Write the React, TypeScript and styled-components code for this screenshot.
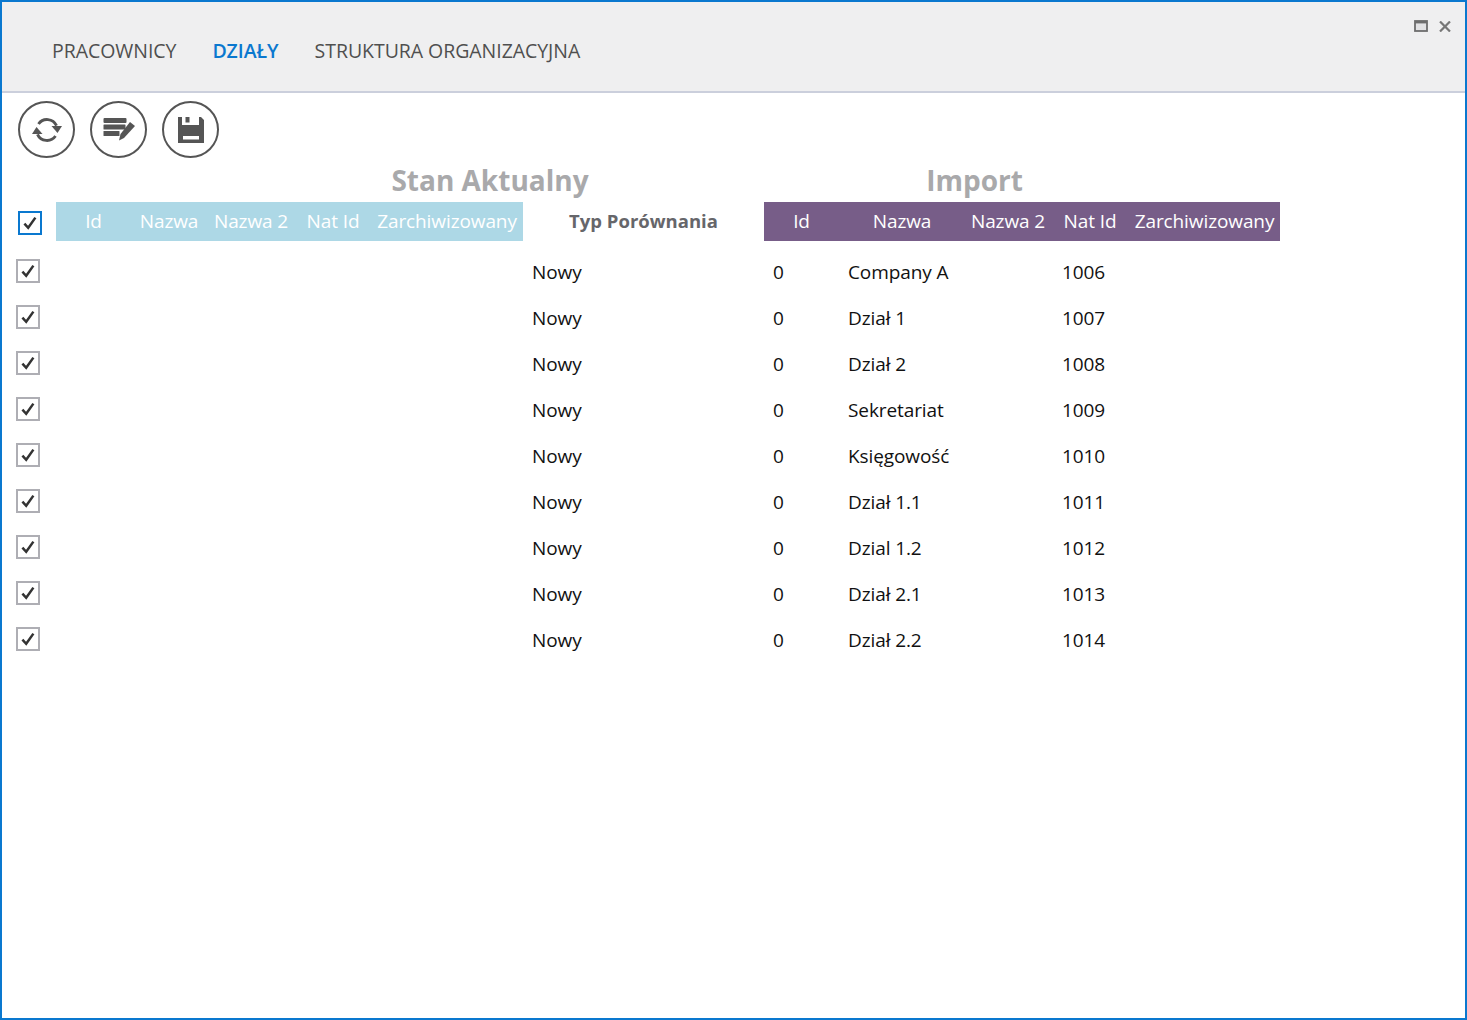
import React from "react";
import styled, { createGlobalStyle } from "styled-components";

const rows = [
  { name: "Company A", natId: "1006" },
  { name: "Dział 1", natId: "1007" },
  { name: "Dział 2", natId: "1008" },
  { name: "Sekretariat", natId: "1009" },
  { name: "Księgowość", natId: "1010" },
  { name: "Dział 1.1", natId: "1011" },
  { name: "Dzial 1.2", natId: "1012" },
  { name: "Dział 2.1", natId: "1013" },
  { name: "Dział 2.2", natId: "1014" },
];

const Global = createGlobalStyle`
  html, body {
    margin: 0;
    padding: 0;
    background: #fff;
    font-family: "Open Sans", "Noto Sans", "Liberation Sans", sans-serif;
  }
`;

const Window = styled.div`
  box-sizing: border-box;
  width: 1467px;
  height: 1020px;
  border: 2px solid #0a78cf;
  overflow: hidden;
`;

const Header = styled.div`
  position: relative;
  box-sizing: border-box;
  height: 91px;
  background: #efeff0;
  border-bottom: 2px solid #cbcfdc;
  display: flex;
  align-items: center;
  gap: 36px;
  padding: 8px 0 0 50px;
`;

const Tab = styled.div<{ $active?: boolean }>`
  font-size: 19.5px;
  letter-spacing: -0.05px;
  font-weight: ${(p) => (p.$active ? 600 : 400)};
  color: ${(p) => (p.$active ? "#0a78cf" : "#4f4f4f")};
`;

const WindowButtons = styled.div`
  position: absolute;
  top: 18px;
  right: 14px;
  display: flex;
  align-items: flex-end;
  gap: 11px;
`;

const Toolbar = styled.div`
  display: flex;
  gap: 15px;
  padding: 8px 0 0 16px;
`;

const RoundButton = styled.div`
  box-sizing: border-box;
  width: 57px;
  height: 57px;
  border: 2.5px solid #555;
  border-radius: 50%;
  display: flex;
  align-items: center;
  justify-content: center;
`;

const Titles = styled.div`
  display: grid;
  grid-template-columns: 380px 589px;
  padding: 4px 0 0 298px;
  height: 40px;
`;

const Title = styled.div`
  font-size: 28px;
  line-height: 36px;
  font-weight: 700;
  color: #a9a9ab;
  text-align: center;
`;

const TableHead = styled.div`
  display: flex;
  align-items: center;
  height: 39px;
  padding-left: 16px;
`;

const HeadCheck = styled.div`
  width: 38px;
  padding-top: 3px;
`;

const HeadGroup = styled.div<{ $bg: string; $cols: string }>`
  display: grid;
  grid-template-columns: ${(p) => p.$cols};
  height: 39px;
  background: ${(p) => p.$bg};
`;

const HeadCell = styled.div`
  color: #fff;
  font-size: 19px;
  letter-spacing: -0.1px;
  line-height: 39px;
  text-align: center;
  white-space: nowrap;
`;

const CompareHead = styled.div`
  width: 241px;
  padding-bottom: 2px;
  text-align: center;
  font-size: 18.5px;
  font-weight: 700;
  color: #66666a;
`;

const Body = styled.div`
  padding: 7px 0 0 14px;
`;

const Row = styled.div`
  display: grid;
  grid-template-columns: 516px 241px 75px 214px 100px;
  height: 46px;
  align-items: center;
  font-size: 19px;
  letter-spacing: -0.1px;
  color: #111;
`;

const Cell = styled.div`
  padding-top: 2px;
  white-space: nowrap;
`;

const CheckBox = styled.div<{ $focused?: boolean }>`
  box-sizing: border-box;
  width: 24px;
  height: 24px;
  border: 2px solid ${(p) => (p.$focused ? "#0a78cf" : "#aeaeb4")};
  background: #fff;
  display: flex;
  align-items: center;
  justify-content: center;
`;

function Check({ focused }: { focused?: boolean }) {
  return (
    <CheckBox $focused={focused}>
      <svg width="16" height="16" viewBox="0 0 16 16">
        <path d="M2.4 8.6 L6.2 12.8 L13.4 2.6" fill="none" stroke="#333" strokeWidth="2.5" />
      </svg>
    </CheckBox>
  );
}

function SyncIcon() {
  return (
    <svg width="30" height="26" viewBox="0 0 30 26">
      <path d="M6.5 7 A10.4 10.4 0 0 1 24.5 8.7" fill="none" stroke="#555" strokeWidth="2.9" />
      <path d="M19.5 9 L30 9 L25.5 16 Z" fill="#555" />
      <path d="M23.5 19 A10.4 10.4 0 0 1 5.5 17.3" fill="none" stroke="#555" strokeWidth="2.9" />
      <path d="M10.5 17 L0 17 L4.5 10 Z" fill="#555" />
    </svg>
  );
}

function EditIcon() {
  return (
    <svg width="32" height="23" viewBox="0 0 32 23">
      <rect x="0.5" y="0" width="23" height="5" rx="1" fill="#555" />
      <rect x="0.5" y="6.5" width="22" height="5" rx="0.6" fill="#555" />
      <rect x="0.5" y="13" width="16" height="5" rx="0.6" fill="#555" />
      <path d="M27 4 L32 8 L21 20 L16 22.5 L17.5 16 Z" fill="#555" />
    </svg>
  );
}

function SaveIcon() {
  return (
    <svg width="26" height="26" viewBox="0 0 26 26">
      <path
        fillRule="evenodd"
        fill="#555"
        d="M0 0 H4 V8 H21 V0 H23 L26 3 V26 H0 Z M5 19 V22.5 H21 V19 Z M7.5 0 H11.5 V5.5 H7.5 Z"
      />
    </svg>
  );
}

export default function App() {
  return (
    <>
      <Global />
      <Window>
        <Header>
          <Tab>PRACOWNICY</Tab>
          <Tab $active>DZIAŁY</Tab>
          <Tab>STRUKTURA ORGANIZACYJNA</Tab>
          <WindowButtons>
            <svg width="14" height="12" viewBox="0 0 14 12">
              <rect x="1" y="1" width="12" height="10" fill="#e2e2e4" stroke="#6d6d6d" strokeWidth="1.8" />
              <rect x="1" y="1" width="12" height="2.4" fill="#6d6d6d" />
            </svg>
            <svg width="12" height="11" viewBox="0 0 12 11">
              <path d="M1 0.5 L11 10.5 M11 0.5 L1 10.5" stroke="#777" strokeWidth="2.2" />
            </svg>
          </WindowButtons>
        </Header>
        <Toolbar>
          <RoundButton><SyncIcon /></RoundButton>
          <RoundButton><EditIcon /></RoundButton>
          <RoundButton><SaveIcon /></RoundButton>
        </Toolbar>
        <Titles>
          <Title>Stan Aktualny</Title>
          <Title>Import</Title>
        </Titles>
        <TableHead>
          <HeadCheck><Check focused /></HeadCheck>
          <HeadGroup $bg="#add8e6" $cols="75px 76px 88px 76px 152px">
            <HeadCell>Id</HeadCell>
            <HeadCell>Nazwa</HeadCell>
            <HeadCell>Nazwa 2</HeadCell>
            <HeadCell>Nat Id</HeadCell>
            <HeadCell>Zarchiwizowany</HeadCell>
          </HeadGroup>
          <CompareHead>Typ Porównania</CompareHead>
          <HeadGroup $bg="#775d88" $cols="75px 126px 86px 78px 151px">
            <HeadCell>Id</HeadCell>
            <HeadCell>Nazwa</HeadCell>
            <HeadCell>Nazwa 2</HeadCell>
            <HeadCell>Nat Id</HeadCell>
            <HeadCell>Zarchiwizowany</HeadCell>
          </HeadGroup>
        </TableHead>
        <Body>
          {rows.map((r) => (
            <Row key={r.natId}>
              <Check />
              <Cell>Nowy</Cell>
              <Cell>0</Cell>
              <Cell>{r.name}</Cell>
              <Cell>{r.natId}</Cell>
            </Row>
          ))}
        </Body>
      </Window>
    </>
  );
}
